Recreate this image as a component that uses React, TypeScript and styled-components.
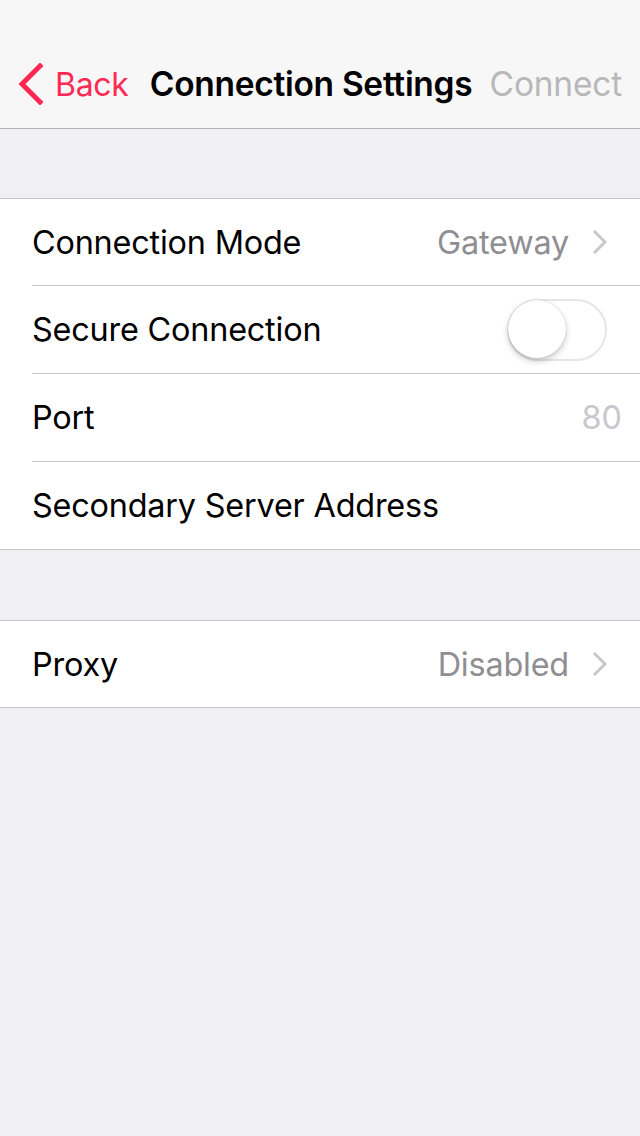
import React from "react";
import styled, { createGlobalStyle } from "styled-components";

const Global = createGlobalStyle`
  html, body { margin: 0; padding: 0; background: #efeff4; }
  body { font-family: Inter, "Noto Sans", sans-serif; -webkit-font-smoothing: antialiased; }
  #root { min-height: 1136px; background: #efeff4; }
`;

const Page = styled.div`
  width: 640px;
  min-height: 1136px;
  background: #efeff4;
  display: flex;
  flex-direction: column;
`;

const NavBar = styled.header`
  height: 129px;
  box-sizing: border-box;
  padding-top: 40px;
  background: #f7f7f8;
  border-bottom: 1px solid #b2b2b2;
  display: flex;
  align-items: center;
  justify-content: space-between;
`;

const BackButton = styled.div`
  display: flex;
  align-items: center;
  gap: 11px;
  padding-left: 16px;
  color: #fe2a53;
  font-size: 32px;
  letter-spacing: -0.3px;
`;

const Title = styled.div`
  font-size: 33.5px;
  font-weight: 600;
  color: #000;
  letter-spacing: -0.3px;
  margin-left: 4px;
`;

const NavAction = styled.div`
  font-size: 33.5px;
  color: #b8b8b8;
  padding-right: 18px;
  letter-spacing: -0.2px;
`;

const Gap = styled.div<{ $h: number }>`
  height: ${(p) => p.$h}px;
`;

const Group = styled.section`
  background: #fff;
  border-top: 1px solid #c8c7cc;
  border-bottom: 1px solid #c8c7cc;
`;

const Row = styled.div<{ $last?: boolean }>`
  height: 87px;
  margin-left: 32px;
  padding-right: 18px;
  display: flex;
  align-items: center;
  justify-content: space-between;
  border-bottom: ${(p) => (p.$last ? "none" : "1px solid #c8c7cc")};
  &:first-child {
    height: 86px;
  }
`;

const Label = styled.div`
  font-size: 32.4px;
  color: #000;
  letter-spacing: -0.2px;
`;

const Detail = styled.div`
  display: flex;
  align-items: center;
  gap: 24px;
  font-size: 32.4px;
  color: #8e8e93;
  letter-spacing: -0.2px;
  margin-right: 15px;
`;

const Placeholder = styled.div`
  font-size: 32.4px;
  color: #c7c7cd;
`;

const Toggle = styled.div`
  width: 100px;
  height: 62px;
  border-radius: 31px;
  box-sizing: border-box;
  border: 2px solid #e5e5ea;
  background: #fff;
  position: relative;
  margin-right: 15px;
`;

const Knob = styled.div`
  position: absolute;
  left: -1px;
  top: -1px;
  width: 58px;
  height: 58px;
  border-radius: 50%;
  background: #fff;
  box-shadow: 0 3px 6px rgba(0, 0, 0, 0.22), 0 0 1px rgba(0, 0, 0, 0.25);
`;

const Chevron = () => (
  <svg width="14" height="24" viewBox="0 0 14 24">
    <path d="M2 2 L12 12 L2 22" fill="none" stroke="#c7c7cc" strokeWidth="3" strokeLinecap="square" />
  </svg>
);

const BackChevron = () => (
  <svg width="28" height="42" viewBox="0 0 28 42">
    <path d="M24 3 L6 21 L24 39" fill="none" stroke="#fe2a53" strokeWidth="5" strokeLinecap="square" />
  </svg>
);

export default function App() {
  return (
    <Page>
      <Global />
      <NavBar>
        <BackButton>
          <BackChevron />
          <span>Back</span>
        </BackButton>
        <Title>Connection Settings</Title>
        <NavAction>Connect</NavAction>
      </NavBar>
      <Gap $h={69} />
      <Group>
        <Row>
          <Label>Connection Mode</Label>
          <Detail>
            Gateway <Chevron />
          </Detail>
        </Row>
        <Row>
          <Label>Secure Connection</Label>
          <Toggle>
            <Knob />
          </Toggle>
        </Row>
        <Row>
          <Label>Port</Label>
          <Placeholder>80</Placeholder>
        </Row>
        <Row $last>
          <Label>Secondary Server Address</Label>
        </Row>
      </Group>
      <Gap $h={70} />
      <Group>
        <Row $last>
          <Label>Proxy</Label>
          <Detail>
            Disabled <Chevron />
          </Detail>
        </Row>
      </Group>
    </Page>
  );
}
